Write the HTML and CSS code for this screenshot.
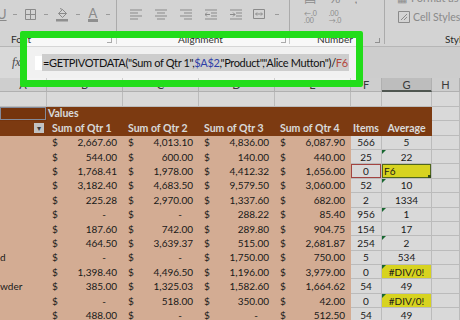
FILE: index.html
```html
<!DOCTYPE html>
<html lang="en">
<head>
    <meta charset="UTF-8">
    <meta name="viewport" content="width=device-width, initial-scale=1.0">
    <title>GETPIVOTDATA</title>
    <link rel="stylesheet" href="styles.css">
</head>
<body>
    <div class="ribbon">
        <div class="grp grp-font">
            <div class="tools">
                <span class="u">U</span>
                <span class="dd"></span>
                <svg width="11" height="11" viewBox="0 0 11 11"><path d="M.5.5h10v10H.5zM5.5.5v10M.5 5.5h10" fill="none" stroke="#a3a3a3"/></svg>
                <span class="dd"></span>
                <svg width="12" height="15" viewBox="0 0 12 15"><path d="M2.5 6.5l4-4 4 4-4 4zM4 1.5l2.5 1M2.5 6.5h8" fill="none" stroke="#a3a3a3"/><rect y="12" width="12" height="2.5" fill="#a8a8a8"/></svg>
                <span class="dd"></span>
                <span class="fc">A</span>
                <span class="dd"></span>
            </div>
            <div class="label lbl-font">Font<span class="launch"></span></div>
        </div>
        <div class="grp grp-align">
            <div class="tools">
                <svg width="12" height="11" viewBox="0 0 12 11"><path d="M0 1h12M0 4h8M0 7h12M0 10h8" stroke="#a3a3a3"/></svg>
                <svg width="12" height="11" viewBox="0 0 12 11"><path d="M0 1h12M2 4h8M0 7h12M2 10h8" stroke="#a3a3a3"/></svg>
                <svg width="12" height="11" viewBox="0 0 12 11"><path d="M0 1h12M4 4h8M0 7h12M4 10h8" stroke="#a3a3a3"/></svg>
                <svg width="12" height="11" viewBox="0 0 12 11"><path d="M0 1h12M6 4h6M6 7h6M0 10h12M5 5.5H0M2 3.5l-2 2 2 2" fill="none" stroke="#a3a3a3"/></svg>
                <svg width="12" height="11" viewBox="0 0 12 11"><path d="M0 1h12M6 4h6M6 7h6M0 10h12M0 5.5h5M3 3.5l2 2-2 2" fill="none" stroke="#a3a3a3"/></svg>
                <svg class="merge" width="12" height="12" viewBox="0 0 12 12"><path d="M.5 1.5h11v9H.5zM3 6h6M4 4.5L2.5 6 4 7.5M8 4.5L9.5 6 8 7.5" fill="none" stroke="#a3a3a3"/></svg>
                <span class="dd"></span>
            </div>
            <div class="label lbl-align">Alignment<span class="launch"></span></div>
        </div>
        <div class="grp grp-num">
            <div class="tools num-tools">
                <div class="cut"><span>▤</span><span>%</span><span>,</span></div>
                <div class="dec">
                    <span class="two">←.0<br>.00</span>
                    <span class="two">.00<br>→.0</span>
                </div>
            </div>
            <div class="label lbl-num">Number<span class="launch"></span></div>
        </div>
        <div class="grp grp-style">
            <div class="tools style-tools">
                <div class="cut"><span>▦</span><span>Format as Table</span></div>
                <div class="cs">
                    <svg width="12" height="12" viewBox="0 0 12 12"><path d="M.5.5h11v11H.5zM3 9l6-6M6 9l3-3" fill="none" stroke="#a3a3a3"/></svg>
                    <span>Cell Styles</span><span class="car">▾</span>
                </div>
            </div>
            <div class="label lbl-style">Styles</div>
        </div>
    </div>

    <div class="fbar">
        <span class="fx">fx</span>
        <div class="input">
            <span class="caret"></span>
            <span class="sel">=GETPIVOTDATA("Sum of Qtr 1",<span class="ref-a">$A$2</span>,"Product","Alice Mutton")/<span class="ref-f">F6</span></span>
        </div>
    </div>

    <div class="sheet" id="sheet"></div>

    <div class="spot"></div>

    <script>
        const rows = [
            ['', '2,667.60', '4,013.10', '4,836.00', '6,087.90', '566', '5'],
            ['', '544.00', '600.00', '140.00', '440.00', '25', '22'],
            ['', '1,768.41', '1,978.00', '4,412.32', '1,656.00', '0', 'F6'],
            ['', '3,182.40', '4,683.50', '9,579.50', '3,060.00', '52', '10'],
            ['', '225.28', '2,970.00', '1,337.60', '682.00', '2', '1334'],
            ['', '-', '-', '288.22', '85.40', '956', '1'],
            ['', '187.60', '742.00', '289.80', '904.75', '154', '17'],
            ['', '464.50', '3,639.37', '515.00', '2,681.87', '254', '2'],
            ['d', '-', '-', '1,750.00', '750.00', '5', '534'],
            ['', '1,398.40', '4,496.50', '1,196.00', '3,979.00', '0', '#DIV/0!'],
            ['wder', '385.00', '1,325.03', '1,582.60', '1,664.62', '54', '49'],
            ['', '-', '518.00', '350.00', '42.00', '0', '#DIV/0!'],
            ['', '488.00', '-', '-', '512.50', '54', '49']
        ];

        let html = '';
        'ABCDEFGH'.split('').forEach(l => {
            html += '<div class="c hd' + (l === 'G' ? ' hd-sel' : '') + '">' + l + '</div>';
        });
        for (let i = 0; i < 8; i++) html += '<div class="c"></div>';

        html += '<div class="c pv pv-corner"></div><div class="c pv pv-values">Values</div><div class="c"></div>';
        html += '<div class="c pv pv-a"><span class="filter">▾</span></div>';
        for (let q = 1; q <= 4; q++) html += '<div class="c pv">Sum of Qtr ' + q + '</div>';
        html += '<div class="c pv mid">Items</div><div class="c pv mid">Average</div><div class="c"></div>';

        rows.forEach((r, i) => {
            html += '<div class="c tan"><span class="lbl">' + r[0] + '</span></div>';
            for (let k = 1; k <= 4; k++) {
                const dash = r[k] === '-' ? ' dash' : '';
                html += '<div class="c tan acct"><span>$</span><span class="' + dash + '">' + r[k] + '</span></div>';
            }
            html += '<div class="c mid' + (i === 2 ? ' refd' : '') + '">' + r[5] + '</div>';
            let g = 'c mid';
            if (i % 2 === 1) g += ' tri';
            if (r[6] === 'F6') g += ' yel active';
            if (r[6] === '#DIV/0!') g += ' yel';
            html += '<div class="' + g + '">' + r[6] + '</div>';
            html += '<div class="c"></div>';
        });
        document.getElementById('sheet').innerHTML = html;
    </script>
</body>
</html>
```

FILE: styles.css
```css
* {
    box-sizing: border-box;
}
body {
    margin: 0;
    width: 460px;
    height: 320px;
    overflow: hidden;
    position: relative;
    background: #fff;
    color: #1e1e1e;
    font-family: Lato, "Open Sans", sans-serif;
}

/* ribbon */
.ribbon {
    height: 47px;
    display: flex;
    background: #f8f8f8;
    border-bottom: 1px solid #d6d6d6;
    overflow: hidden;
}
.grp {
    display: flex;
    flex-direction: column;
    flex-shrink: 0;
    border-right: 1px solid #c9c9c9;
    height: 44px;
}
.grp-font { width: 117px; }
.grp-align { width: 173px; }
.grp-num { width: 95px; }
.grp-style {
    flex: 1;
    min-width: 0;
    border-right: 0;
}
.tools {
    height: 34px;
    display: flex;
    align-items: center;
    gap: 8px;
    padding-bottom: 6px;
    color: #a3a3a3;
    white-space: nowrap;
}
.u {
    margin-left: -3px;
    width: 8px;
    font-size: 13px;
    text-decoration: underline;
}
.dd {
    width: 4px;
    height: 1px;
    background: #b5b5b5;
}
.fc {
    width: 10px;
    font-size: 13px;
    line-height: 12px;
    text-align: center;
    border-bottom: 3px solid #a8a8a8;
}
.grp-align .tools {
    gap: 13px;
    padding-left: 13px;
}
.grp-align .merge {
    margin-left: -2px;
}
.grp-align .dd {
    margin-left: -3px;
}
.num-tools,
.style-tools {
    flex-direction: column;
    align-items: flex-start;
    gap: 0;
}
.cut {
    height: 8px;
    margin-top: -4px;
    display: flex;
    gap: 14px;
    font-size: 13px;
    line-height: 4px;
    overflow: hidden;
}
.num-tools .cut {
    padding-left: 14px;
}
.dec {
    display: flex;
    gap: 12px;
    padding: 6px 0 0 14px;
}
.two {
    font-size: 7px;
    line-height: 7px;
}
.style-tools .cut {
    padding-left: 12px;
    gap: 4px;
    font-size: 11px;
}
.cs {
    display: flex;
    align-items: center;
    gap: 3px;
    padding: 7px 0 0 13px;
    font-size: 10.5px;
}
.car {
    font-size: 9px;
    margin-left: 2px;
}
.label {
    height: 10px;
    display: flex;
    align-items: center;
    font-size: 10px;
    color: #333;
    position: relative;
    white-space: nowrap;
}
.launch {
    position: absolute;
    bottom: 1px;
    width: 5px;
    height: 5px;
    border-right: 1px solid #aaa;
    border-bottom: 1px solid #aaa;
}
.lbl-font { padding-left: 11px; }
.lbl-font .launch { left: 107px; }
.lbl-align { padding-left: 61px; }
.lbl-align .launch { left: 164px; }
.lbl-num { padding-left: 27px; }
.lbl-num .launch { left: 85px; }
.lbl-style { padding-left: 60px; }

/* formula bar */
.fbar {
    height: 31px;
    display: flex;
    align-items: center;
    background: #fff;
}
.fx {
    width: 27px;
    padding-left: 12px;
    font-family: "Liberation Serif", serif;
    font-style: italic;
    font-size: 12px;
    color: #555;
}
.input {
    flex: 1;
    height: 100%;
    display: flex;
    align-items: center;
    padding-left: 8px;
    background: #f1f1f1;
}
.caret {
    width: 7px;
    height: 14px;
    background: #fff;
}
.sel {
    background: #cdcdcd;
    font-size: 11px;
    letter-spacing: -0.36px;
    line-height: 17px;
    padding: 0 1px;
    white-space: nowrap;
    color: #111;
}
.ref-a { color: #2f3fa8; }
.ref-f { color: #b5473c; }

/* worksheet */
.sheet {
    display: grid;
    grid-template-columns: 47px 76px 76px 76px 76px 31px 50px 1fr;
    grid-auto-rows: 14.4px;
    font-size: 10px;
}
.c {
    position: relative;
    display: flex;
    align-items: center;
    white-space: nowrap;
    overflow: hidden;
    border-right: 1px solid #dcdcdc;
    border-bottom: 1px solid #dcdcdc;
}
.hd {
    justify-content: center;
    background: #f3f3f3;
    color: #444;
    border-color: #cfcfcf;
    font-size: 11px;
}
.hd-sel {
    background: #dedede;
    border-bottom: 2px solid #5d6660;
}
.pv {
    background: #924515;
    border-color: transparent;
    color: #fff;
    font-weight: 700;
    padding-left: 5px;
    font-size: 10.5px;
}
.pv-corner {
    background: #8a3e10;
    box-shadow: inset 0 0 0 1px #9aa3b5;
}
.pv-values {
    grid-column: span 6;
    padding-left: 1px;
}
.pv-a {
    justify-content: flex-end;
    padding-right: 2px;
}
.filter {
    width: 10px;
    height: 10px;
    background: #e4e4e4;
    color: #444;
    font-size: 8px;
    line-height: 10px;
    text-align: center;
    font-weight: 400;
}
.pv.mid {
    justify-content: center;
    padding-left: 0;
}
.tan {
    background: #f8cbad;
    border-color: transparent;
}
.lbl {
    padding-left: 0;
}
.acct {
    justify-content: space-between;
    padding: 0 5px;
}
.dash {
    padding-right: 11px;
}
.mid {
    justify-content: center;
}
.refd {
    box-shadow: inset 0 0 0 1px #c0504d;
}
.yel {
    background: #fdf826;
}
.active {
    justify-content: flex-start;
    padding-left: 2px;
    box-shadow: inset 0 0 0 1px #5e7a22;
}
.active::after {
    content: '';
    position: absolute;
    right: 0;
    bottom: 0;
    width: 3px;
    height: 3px;
    background: #3d5a18;
}
.tri::before {
    content: '';
    position: absolute;
    left: 0;
    top: 0;
    border-style: solid;
    border-width: 4px 4px 0 0;
    border-color: #1d7a3a transparent transparent transparent;
}

/* highlight frame */
.spot {
    position: absolute;
    left: 20px;
    top: 31px;
    width: 343px;
    height: 56px;
    border: 7px solid #22dd1a;
    border-radius: 2px;
    box-shadow: 0 0 0 600px rgba(0, 0, 0, 0.15);
}
```
